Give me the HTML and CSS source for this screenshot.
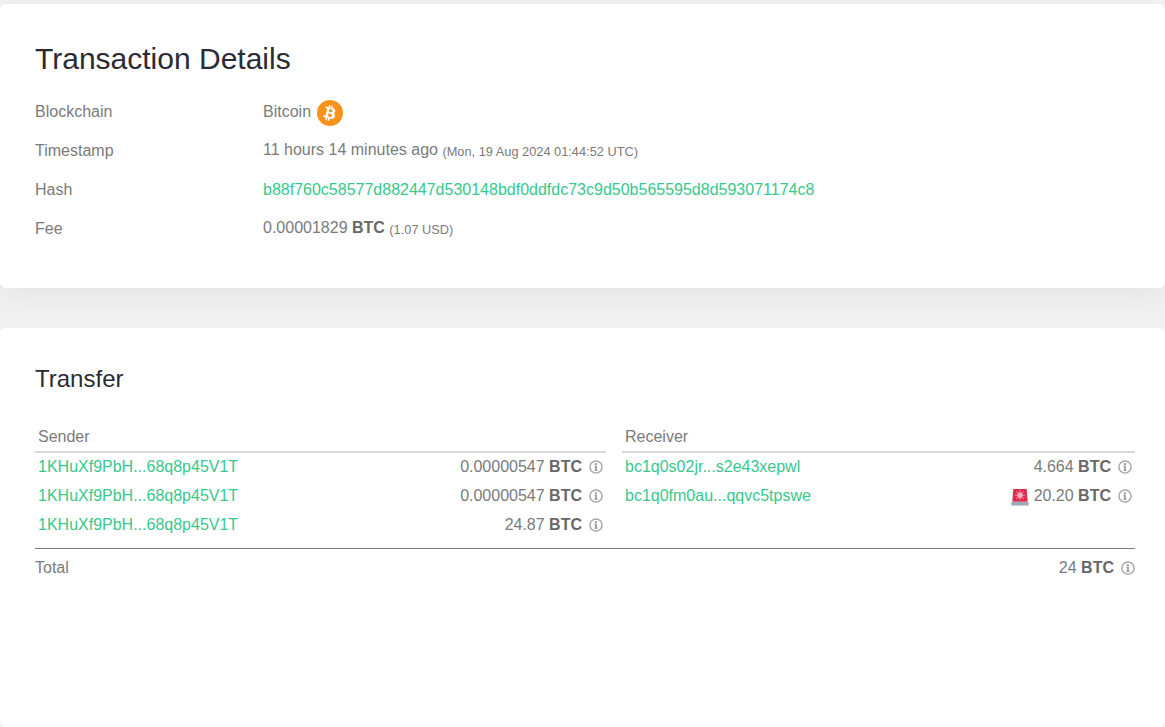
FILE: index.html
```html
<!DOCTYPE html>
<html lang="en">
<head>
<meta charset="utf-8">
<title>Transaction Details</title>
<link rel="stylesheet" href="styles.css">
</head>
<body>
<svg class="defs" width="0" height="0" aria-hidden="true">
  <symbol id="info" viewBox="0 0 14 14">
    <circle cx="7" cy="7" r="6.100" fill="none" stroke="#a9a9b0" stroke-width="1.500"/>
    <path d="M5.900 3.300h1.900v1.600H5.900zM5.500 5.800h2.300v3.900h.8v1H5.300v-1h.9V6.800h-.7z" fill="#8e8e94"/>
  </symbol>
</svg>
<main class="page">
  <section class="card details">
    <h1 class="title">Transaction Details</h1>
    <div class="row"><div class="label">Blockchain</div><div class="value">Bitcoin <svg class="coin" viewBox="0 0 26 26" aria-hidden="true"><circle cx="13" cy="13" r="13" fill="#f7931a"/><path fill="#fff" fill-rule="evenodd" d="M18.300 11.300c.25-1.700-1.040-2.600-2.800-3.200l.57-2.300-1.400-.35-.56 2.240-1.120-.27.560-2.250-1.400-.35-.57 2.300-2.820-.7-.37 1.500 1.020.25c.57.140.67.520.65.820l-1.560 6.270c-.07.170-.25.430-.65.330l-1.020-.25-.7 1.610 2.700.67-.58 2.340 1.400.35.580-2.310 1.120.29-.57 2.300 1.400.35.580-2.330c2.400.45 4.200.27 4.960-1.900.610-1.740-.03-2.750-1.290-3.400.92-.21 1.610-.81 1.790-2.050zm-3.200 4.500c-.430 1.740-3.360.8-4.310.56l.770-3.080c.95.240 4 .71 3.540 2.520zm.43-4.530c-.4 1.580-2.840.78-3.630.58l.7-2.800c.79.200 3.340.570 2.930 2.220z"/></svg></div></div>
    <div class="row"><div class="label">Timestamp</div><div class="value">11 hours 14 minutes ago <small>(Mon, 19 Aug 2024 01:44:52 UTC)</small></div></div>
    <div class="row"><div class="label">Hash</div><div class="value"><a class="link" href="#">b88f760c58577d882447d530148bdf0ddfdc73c9d50b565595d8d593071174c8</a></div></div>
    <div class="row"><div class="label">Fee</div><div class="value">0.00001829 <b>BTC</b> <small>(1.07 USD)</small></div></div>
  </section>
  <section class="card transfer">
    <h2 class="subtitle">Transfer</h2>
    <div class="columns">
      <div class="side">
        <div class="side-head">Sender</div>
        <div class="tx"><a class="link" href="#">1KHuXf9PbH...68q8p45V1T</a><span class="amt"><span>0.00000547 <b>BTC</b></span><svg class="info"><use href="#info"/></svg></span></div>
        <div class="tx"><a class="link" href="#">1KHuXf9PbH...68q8p45V1T</a><span class="amt"><span>0.00000547 <b>BTC</b></span><svg class="info"><use href="#info"/></svg></span></div>
        <div class="tx"><a class="link" href="#">1KHuXf9PbH...68q8p45V1T</a><span class="amt"><span>24.87 <b>BTC</b></span><svg class="info"><use href="#info"/></svg></span></div>
      </div>
      <div class="side">
        <div class="side-head">Receiver</div>
        <div class="tx"><a class="link" href="#">bc1q0s02jr...s2e43xepwl</a><span class="amt"><span>4.664 <b>BTC</b></span><svg class="info"><use href="#info"/></svg></span></div>
        <div class="tx"><a class="link" href="#">bc1q0fm0au...qqvc5tpswe</a><span class="amt"><svg class="siren" viewBox="0 0 18 18" aria-hidden="true"><path d="M2.300 1h13.400l1 12.700H1.300z" fill="#e0294f"/><path d="M0.300 14h17.400v3.600H0.300z" fill="#9aabb5"/><g stroke="#f28ea3" stroke-width="1"><path d="M9 2.200v10M3.800 7.200h10.400M5.200 3.400l7.600 7.600M12.800 3.400l-7.600 7.600"/></g><circle cx="9" cy="7.200" r="2.700" fill="#f7b0bf"/></svg><span>20.20 <b>BTC</b></span><svg class="info"><use href="#info"/></svg></span></div>
      </div>
    </div>
    <div class="total"><span>Total</span><span class="amt"><span>24 <b>BTC</b></span><svg class="info"><use href="#info"/></svg></span></div>
  </section>
</main>
</body>
</html>
```
FILE: styles.css
```css
* { box-sizing: border-box; }
html, body { margin: 0; height: 100%; }
body {
  background: #f1f1f1;
  font-family: "Liberation Sans", Arial, sans-serif;
  font-size: 16px;
  color: #7b7b7b;
  overflow: hidden;
}
.defs { position: absolute; }
.page {
  display: flex;
  flex-direction: column;
  gap: 40px;
  padding-top: 4px;
  height: 727px;
}
.card {
  background: #fff;
  border-radius: 6px;
  padding: 0 30px 0 35px;
}
.details {
  height: 284px;
  padding-top: 38px;
  box-shadow: 0 10px 30px rgba(0, 0, 0, .05);
}
.transfer { flex: 1; padding-top: 37px; }
.title {
  margin: 0 0 16px;
  font-size: 30px;
  line-height: 34px;
  font-weight: 400;
  color: #2b2b33;
}
.subtitle {
  margin: 0 0 33px;
  font-size: 24px;
  line-height: 27px;
  font-weight: 400;
  color: #2b2b33;
}
.row {
  display: flex;
  align-items: center;
  height: 39px;
  line-height: 26px;
}
.label { width: 228px; }
.value small { font-size: 12.800px; vertical-align: -1px; }
b { font-weight: 700; color: #686868; }
.coin {
  width: 26px;
  height: 26px;
  margin: -8px 0 -8px 2px;
  vertical-align: -1px;
}
.link { color: #36c98e; text-decoration: none; }
.columns { display: flex; gap: 16px; }
.side { flex: 1 1 0; min-width: 0; }
.side:first-child { flex: 0 0 571px; }
.side-head {
  height: 28px;
  margin-bottom: -1px;
  line-height: 24px;
  padding-left: 3px;
  border-bottom: 2px solid #d9d9d9;
}
.tx {
  display: flex;
  justify-content: space-between;
  align-items: center;
  height: 29px;
  padding: 0 3px 0 3px;
}
.amt { display: inline-flex; align-items: center; }
.info { width: 14px; height: 14px; margin-left: 7px; }
.siren { width: 18px; height: 18px; margin-right: 5px; margin-top: 2px; }
.total {
  display: flex;
  justify-content: space-between;
  align-items: center;
  height: 38px;
  margin-top: 9px;
  border-top: 1px solid #808080;
}
```
